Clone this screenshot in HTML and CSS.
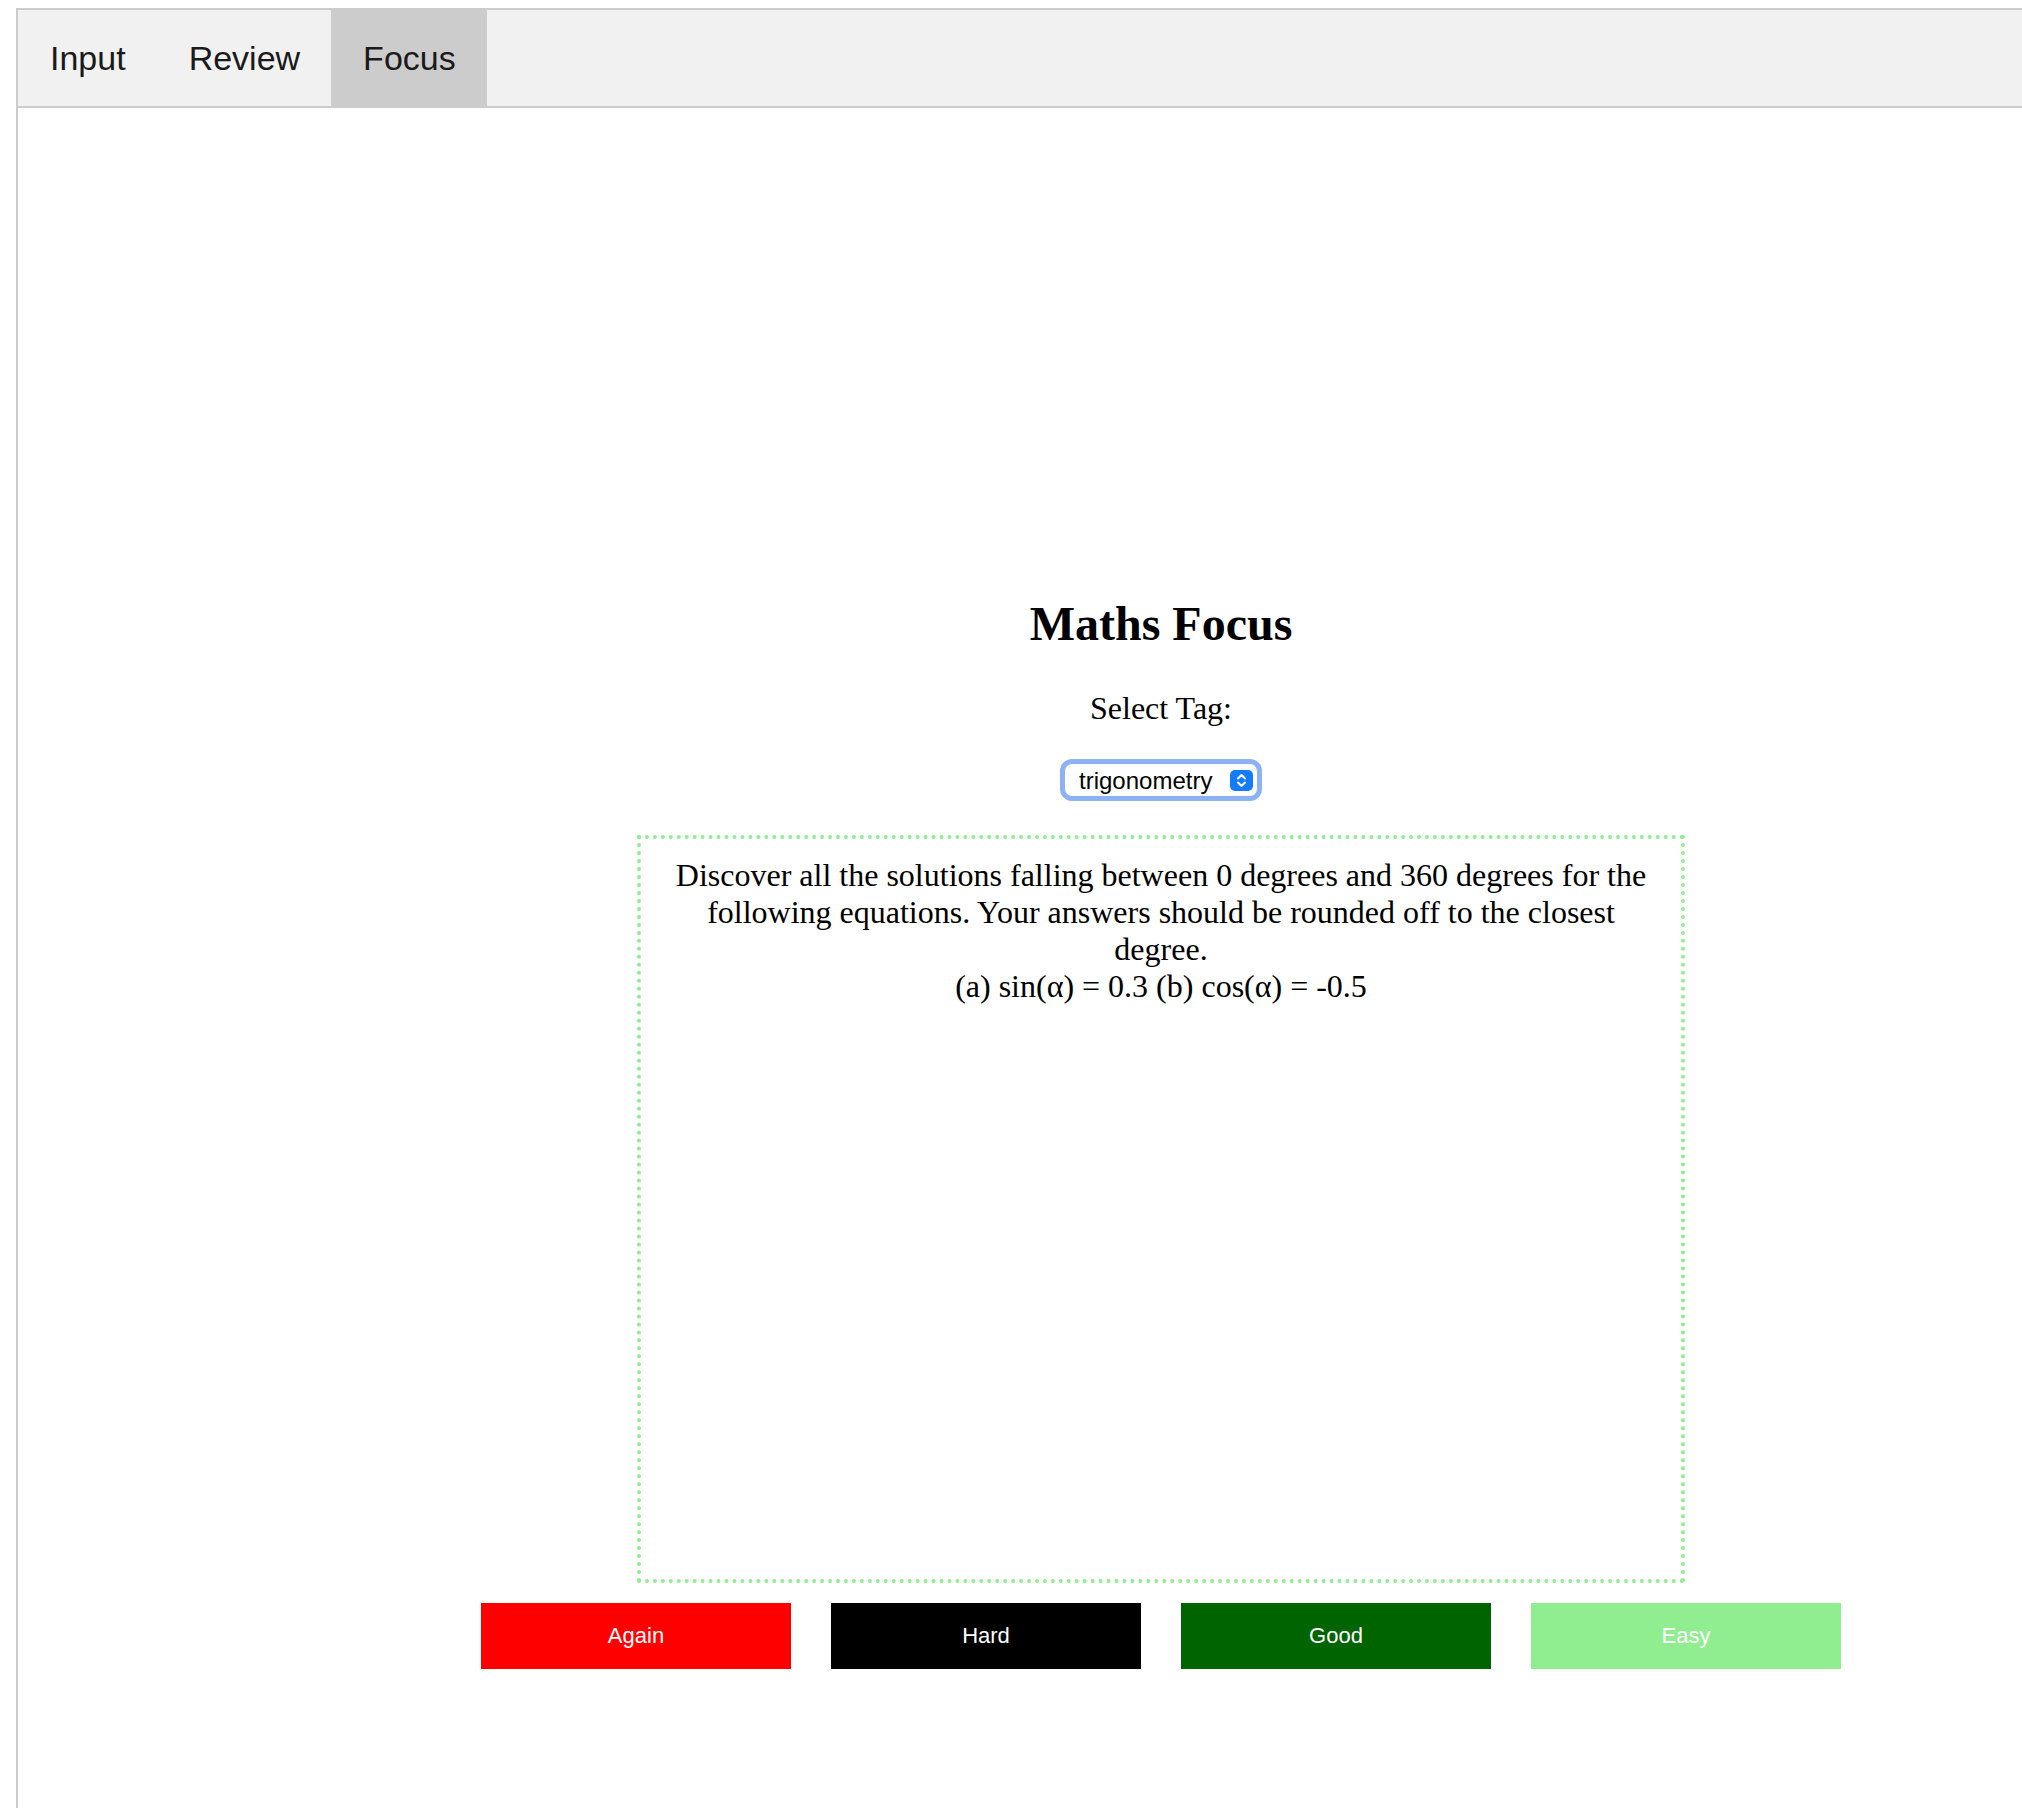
FILE: index.html
```html
<!DOCTYPE html>
<html lang="en">
<head>
<meta charset="utf-8">
<title>Maths Focus</title>
<link rel="stylesheet" href="styles.css">
</head>
<body>
<div class="page">
  <div class="tabbar">
    <button class="tab">Input</button>
    <button class="tab">Review</button>
    <button class="tab active">Focus</button>
  </div>
  <div class="tabcontent">
    <h2 class="title">Maths Focus</h2>
    <label class="tag-label" for="tag">Select Tag:</label>
    <div class="select-wrap">
      <select class="select" id="tag">
        <option>trigonometry</option>
      </select>
      <svg class="stepper" width="23" height="21" viewBox="0 0 23 21" aria-hidden="true">
        <rect x="0" y="0" width="23" height="21" rx="5" fill="#147cfa"/>
        <path d="M8 8.5 L11.5 5 L15 8.5" fill="none" stroke="#fff" stroke-width="2" stroke-linecap="round" stroke-linejoin="round"/>
        <path d="M8 12.5 L11.5 16 L15 12.5" fill="none" stroke="#fff" stroke-width="2" stroke-linecap="round" stroke-linejoin="round"/>
      </svg>
    </div>
    <div class="card">
      Discover all the solutions falling between 0 degrees and 360 degrees for the following equations. Your answers should be rounded off to the closest degree.<br>
      (a) sin(&alpha;) = 0.3 (b) cos(&alpha;) = -0.5
    </div>
    <div class="actions">
      <button class="btn btn-again">Again</button>
      <button class="btn btn-hard">Hard</button>
      <button class="btn btn-good">Good</button>
      <button class="btn btn-easy">Easy</button>
    </div>
  </div>
</div>
</body>
</html>
```
FILE: styles.css
```css
html, body {
  margin: 0;
  padding: 0;
  background: #fff;
}

body {
  font-family: "Liberation Serif", "Times New Roman", serif;
  color: #000;
}

.page {
  margin: 8px 0 0 16px;
}

.tabbar {
  display: flex;
  background: #f1f1f1;
  border: 2px solid #ccc;
  border-right: none;
}

.tab {
  background: transparent;
  border: none;
  margin: 0;
  padding: 28px 31px 28px 32px;
  font-family: "Liberation Sans", Arial, sans-serif;
  font-size: 34px;
  line-height: 40px;
  color: #1a1a1a;
}

.tab.active {
  background: #ccc;
}

.tabcontent {
  box-sizing: border-box;
  height: 1700px;
  border-left: 2px solid #ccc;
  padding: 488px 0 0 282px;
  display: flex;
  flex-direction: column;
  align-items: center;
}

.title {
  margin: 0;
  font-size: 48px;
  font-weight: 700;
  line-height: normal;
}

.tag-label {
  display: block;
  margin-top: 39px;
  font-size: 32px;
  line-height: normal;
}

.select-wrap {
  position: relative;
  margin-top: 32px;
  width: 202px;
  height: 42px;
  box-sizing: border-box;
  padding: 5px;
  border-radius: 12px;
  background: #8cb2f3;
}

.select {
  appearance: none;
  -webkit-appearance: none;
  display: block;
  width: 100%;
  height: 100%;
  margin: 0;
  border: none;
  border-radius: 7px;
  background: #fff;
  padding: 0 0 0 14px;
  font-family: "Liberation Sans", Arial, sans-serif;
  font-size: 24px;
  color: #000;
  outline: none;
}

.stepper {
  position: absolute;
  right: 9px;
  top: 11px;
}

.card {
  margin-top: 34px;
  width: 1048px;
  height: 748px;
  box-sizing: border-box;
  border: 4px dotted #90ee90;
  padding: 18px 20px;
  font-size: 32px;
  line-height: normal;
  text-align: center;
}

.actions {
  margin-top: 20px;
  display: flex;
  gap: 40px;
}

.btn {
  width: 310px;
  height: 66px;
  border: none;
  margin: 0;
  padding: 0;
  color: #fff;
  font-family: "Liberation Sans", Arial, sans-serif;
  font-size: 22px;
}

.btn-again { background: #ff0000; }
.btn-hard { background: #000000; }
.btn-good { background: #006400; }
.btn-easy { background: #90ee90; }
```
